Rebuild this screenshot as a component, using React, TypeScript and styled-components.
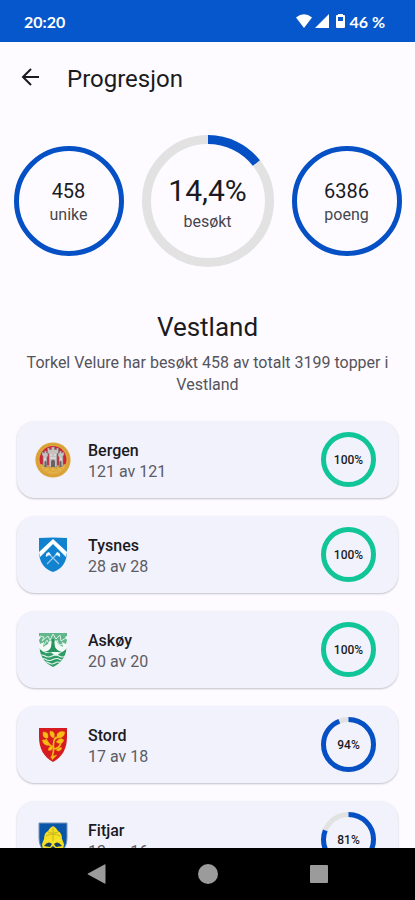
import React from "react";
import styled, { createGlobalStyle } from "styled-components";

const GlobalStyle = createGlobalStyle`
  *, *::before, *::after { box-sizing: border-box; }
  body { margin: 0; background: #fdfbff; }
  button { font: inherit; color: inherit; border: 0; padding: 0; background: none; cursor: pointer; }
`;

const blue = "#0450c4";
const green = "#10c598";

const Screen = styled.div`
  display: flex;
  flex-direction: column;
  height: 100vh;
  overflow: hidden;
  background: #fdfbff;
  color: #1b1b1f;
  font-family: Roboto, "Liberation Sans", sans-serif;
`;

const StatusBar = styled.div`
  display: flex;
  flex: none;
  align-items: center;
  justify-content: space-between;
  height: 42px;
  padding: 0 30px 0 24px;
  background: #0557cb;
  color: #fff;
  font-family: Lato, "Open Sans", sans-serif;
  font-size: 16px;
  font-weight: 700;
`;

const StatusIcons = styled.div`
  display: flex;
  align-items: center;
  gap: 3px;
`;

const AppBar = styled.header`
  display: flex;
  flex: none;
  align-items: center;
  gap: 24px;
  height: 72px;
  padding: 0 19px;
`;

const BackButton = styled.button`
  display: grid;
  width: 24px;
  height: 24px;
`;

const PageTitle = styled.h1`
  margin: 0;
  padding-top: 2px;
  font-size: 24px;
  line-height: 32px;
  font-weight: 400;
`;

const Content = styled.main`
  flex: 1;
  min-height: 0;
  overflow: hidden;
  padding: 21px 0 0;
`;

const Stats = styled.section`
  display: flex;
  align-items: center;
  justify-content: center;
  gap: 18px;
`;

const RingBox = styled.div<{ $size: number }>`
  display: grid;
  flex: none;
  place-items: center;
  width: ${(p) => p.$size}px;
  height: ${(p) => p.$size}px;

  & > * { grid-area: 1 / 1; }
`;

const RingText = styled.div`
  display: flex;
  flex-direction: column;
  align-items: center;
  padding-top: 4px;
`;

const StatValue = styled.strong<{ $large?: boolean }>`
  font-size: ${(p) => (p.$large ? 30 : 20)}px;
  line-height: ${(p) => (p.$large ? 38 : 24)}px;
  font-weight: 400;
`;

const StatLabel = styled.span`
  font-size: 16px;
  line-height: 24px;
  color: #46464d;
`;

const Percent = styled.span`
  padding-top: 1px;
  font-size: 12px;
  font-weight: 500;
`;

const Intro = styled.section`
  padding: 42px 24px 0;
  text-align: center;
`;

const RegionName = styled.h2`
  margin: 0;
  font-size: 26px;
  line-height: 36px;
  font-weight: 400;
`;

const Summary = styled.p`
  margin: 7px 0 0;
  font-size: 16px;
  line-height: 22px;
  color: #54545c;
`;

const List = styled.ul`
  display: flex;
  flex-direction: column;
  gap: 18px;
  margin: 0;
  padding: 25px 17px 18px;
  list-style: none;
`;

const Card = styled.li`
  display: flex;
  align-items: center;
  height: 77px;
  padding: 0 22px 0 18px;
  border-radius: 18px;
  background: #f1f2fc;
  box-shadow: 0 1px 2px rgba(40, 40, 60, 0.28);
`;

const Names = styled.div`
  display: flex;
  flex: 1;
  flex-direction: column;
  padding: 2px 0 0 17px;
`;

const Municipality = styled.h3`
  margin: 0;
  font-size: 16px;
  line-height: 21px;
  font-weight: 500;
`;

const Count = styled.span`
  font-size: 16px;
  line-height: 21px;
  color: #5c5c64;
`;

const NavBar = styled.nav`
  display: flex;
  flex: none;
  align-items: center;
  justify-content: center;
  gap: 87px;
  height: 52px;
  background: #000;
`;

const NavButton = styled.button`
  display: grid;
  width: 24px;
  height: 24px;
  place-items: center;
`;

function Ring({ size, stroke, value, color, children }: {
  size: number; stroke: number; value: number; color: string; children: React.ReactNode;
}) {
  const r = (size - stroke) / 2;
  const c = size / 2;
  return (
    <RingBox $size={size}>
      <svg width={size} height={size} viewBox={`0 0 ${size} ${size}`} aria-hidden="true">
        {value < 100 && <circle cx={c} cy={c} r={r} fill="none" stroke="#e2e2e3" strokeWidth={stroke} />}
        <circle
          cx={c} cy={c} r={r} fill="none" stroke={color} strokeWidth={stroke}
          pathLength={100}
          strokeDasharray={value < 100 ? `${value} ${100 - value}` : undefined}
          transform={`rotate(-90 ${c} ${c})`}
        />
      </svg>
      {children}
    </RingBox>
  );
}

const Bergen = () => (
  <svg width="36" height="36" viewBox="0 0 36 36" aria-hidden="true">
    <circle cx="18" cy="18" r="17.6" fill="#dda63a" />
    <circle cx="18" cy="18" r="15.8" fill="none" stroke="#cf9638" strokeWidth="1" strokeDasharray="1.5 1.5" />
    <circle cx="18" cy="17.5" r="13.4" fill="#cf2238" />
    <path d="M5 22q13 3 26 0a13.5 13.5 0 0 1-26 0z" fill="#e5b448" />
    <g fill="#c4c1bf" stroke="#857579" strokeWidth=".6">
      <path d="M8 24V14l-1-1v-3h1.500v1h1V9h2v2h1.500v3l-1 1v10zM24 25V15l-1-1v-3h1.500V9h2v2h1v-1H29v3l-1 1v10z" />
      <path d="M14 25V12l-1.500-1.500V6h2v1.500h2V5h3v2.500h2V6h2v4.500L22 12v13z" />
    </g>
    <path d="M16 25v-6q2-3 4 0v6zM9.500 25v-5q1-2 2 0v5zM24.500 25v-5q1-2 2 0v5z" fill="#6a6266" />
    <path d="M15 13h2m2 0h2M15 16h6M9 17h2m14 0h2" stroke="#eceae7" />
    <path d="M9 27l3-2 3 2 3-2 3 2 3-2 3 2M12 30l3-2 3 2 3-2 3 2" fill="none" stroke="#d09b3a" strokeWidth=".8" />
  </svg>
);

const Tysnes = () => (
  <svg width="36" height="36" viewBox="0 0 36 36" aria-hidden="true">
    <path d="M4 1q14-1 28 0v13c0 11-5 18-14 21C9 32 4 25 4 14z" fill="#1182cf" />
    <path d="M18 2 32 15l-1 5L18 7 5 20l-1-5z" fill="#fff" />
    <path d="m12 27 11-11M24 27 13 16" stroke="#9fccec" strokeWidth="1.200" />
    <path d="M11 20q-1-4 3-5l2 3q-3 0-5 2zm14 0q1-4-3-5l-2 3q3 0 5 2z" fill="#e7f4fc" />
  </svg>
);

const Askoy = () => (
  <svg width="36" height="36" viewBox="0 0 36 36" aria-hidden="true">
    <clipPath id="askoy-shield"><path d="M4 1h28v10c0 12-5 20-14 24C9 31 4 23 4 11z" /></clipPath>
    <g clipPath="url(#askoy-shield)">
      <path fill="#f4faf7" d="M0 0h36v36H0z" />
      <path d="M4 1h28v3l-2 1 2 3-1 4-4-2 1 5-5-3-2-4-3 3-3-3-2 4-5 3 1-5-4 2-1-4 2-3-2-1z" fill="#62b68c" />
      <path d="M5 4l4 1-2 4 6-5 2 4 3-6 3 5 4-4 1 6 5-3M9 13l3-5 2 4m8-4 2 5 4-1" fill="none" stroke="#d8eee2" strokeWidth="1" />
      <path d="M17 7h2l1 8q2 4 7 5H9q6-1 7-5zM4 16q4 5 9 5l-7 2zM32 16q-4 5-9 5l7 2z" fill="#25945f" />
      <path d="M4 20q4 3 8 1t6 1 6 0 8-1v15H4z" fill="#309d68" />
      <path d="M3 24q4-2 7 0t7 0 7 0 8 0M4 27.500q4-2 7 0t7 0 7 0 7 0M8 31q3-2 6 0t6 0 6 0" fill="none" stroke="#e8f6ef" strokeWidth="1.100" />
    </g>
  </svg>
);

const Stord = () => (
  <svg width="36" height="36" viewBox="0 0 36 36" aria-hidden="true">
    <path d="M4 1h28v9c0 12-5 20-14 25C9 30 4 22 4 10z" fill="#d71920" />
    <path d="M16 31c6-8-1-14 5-21M18 20q-5-2-7-8m7 10q6 0 8-6M20 12l6-5" fill="none" stroke="#f2b514" strokeWidth="1.700" />
    <g fill="#f7bd16" stroke="#e4930e" strokeWidth=".4">
      <path d="M8 5q6-1 5 6-6 1-5-6zM15 4q6 0 4 7-5-1-4-7zM22 7q3-4 8-2-1 7-8 6zM7 13q6-1 8 5-6 2-8-5zM21 15q4-6 8-2-2 6-8 2zM13 23q1-5 5-3-1 5-5 3zM21 23q4-4 6-2-2 5-6 2zM17 29l5-1-5 5z" />
    </g>
  </svg>
);

const Fitjar = () => (
  <svg width="36" height="36" viewBox="0 0 36 36" aria-hidden="true">
    <path d="M4 1h28v15c0 10-6 16-14 19C10 32 4 26 4 16z" fill="#0956a9" stroke="#7896bd" strokeWidth="1" />
    <path d="M9 17q0-6 4-8 1-3 5-5 4 2 5 5 4 2 4 8l2 5-1 7-5-2-5 5-5-5-5 2-1-7z" fill="#f4df22" />
    <path d="M18 6v13M11 14q7-4 14 0M13 10q5 3 10 0" fill="none" stroke="#c9b525" strokeWidth="1" />
    <path d="M9 24q4-6 8-2l-2 3zM27 24q-4-6-8-2l2 3zM12 29l6-5 6 5-6 3z" fill="#173c65" />
    <path d="M10 19q5-3 8 2 3-5 8-2" fill="none" stroke="#f8e941" />
  </svg>
);

const rows = [
  { name: "Bergen", count: "121 av 121", percent: 100, Crest: Bergen },
  { name: "Tysnes", count: "28 av 28", percent: 100, Crest: Tysnes },
  { name: "Askøy", count: "20 av 20", percent: 100, Crest: Askoy },
  { name: "Stord", count: "17 av 18", percent: 94, Crest: Stord },
  { name: "Fitjar", count: "13 av 16", percent: 81, Crest: Fitjar },
];

export default function App() {
  return (
    <Screen>
      <GlobalStyle />
      <StatusBar>
        <span>20:20</span>
        <StatusIcons>
          <svg width="16" height="14" viewBox="0 0 16 14" fill="#fff" aria-hidden="true">
            <path d="M0 3.500Q8-3 16 3.500L8 14z" />
          </svg>
          <svg width="14" height="14" viewBox="0 0 14 14" fill="#fff" aria-hidden="true">
            <path d="M14 0v14H0z" />
          </svg>
          <svg width="14" height="16" viewBox="0 0 14 16" aria-hidden="true">
            <path d="M6 1h5v1h1q1 0 1 1v11q0 1-1 1H5q-1 0-1-1V3q0-1 1-1h1z" fill="#fff" />
            <path d="M6 4h5v4H6z" fill="#0557cb" />
          </svg>
          <span>46 %</span>
        </StatusIcons>
      </StatusBar>
      <AppBar>
        <BackButton aria-label="Tilbake">
          <svg width="24" height="24" viewBox="0 0 24 24" fill="none" stroke="currentColor" strokeWidth="2" aria-hidden="true">
            <path d="M20 11H4M12 3l-8 8 8 8" />
          </svg>
        </BackButton>
        <PageTitle>Progresjon</PageTitle>
      </AppBar>
      <Content>
        <Stats>
          <Ring size={110} stroke={5} value={100} color={blue}>
            <RingText><StatValue>458</StatValue><StatLabel>unike</StatLabel></RingText>
          </Ring>
          <Ring size={132} stroke={9} value={14.4} color={blue}>
            <RingText><StatValue $large>14,4%</StatValue><StatLabel>besøkt</StatLabel></RingText>
          </Ring>
          <Ring size={110} stroke={5} value={100} color={blue}>
            <RingText><StatValue>6386</StatValue><StatLabel>poeng</StatLabel></RingText>
          </Ring>
        </Stats>
        <Intro>
          <RegionName>Vestland</RegionName>
          <Summary>Torkel Velure har besøkt 458 av totalt 3199 topper i Vestland</Summary>
        </Intro>
        <List>
          {rows.map(({ name, count, percent, Crest }) => (
            <Card key={name}>
              <Crest />
              <Names>
                <Municipality>{name}</Municipality>
                <Count>{count}</Count>
              </Names>
              <Ring size={55} stroke={5} value={percent} color={percent === 100 ? green : blue}>
                <Percent>{percent}%</Percent>
              </Ring>
            </Card>
          ))}
        </List>
      </Content>
      <NavBar aria-label="System">
        <NavButton aria-label="Tilbake">
          <svg width="20" height="20" viewBox="0 0 20 20" fill="#9b9b9b" aria-hidden="true">
            <path d="M17.500.5q1-.5 1 .5v18q0 1-1 .5L1 10.500q-1-.5 0-1z" />
          </svg>
        </NavButton>
        <NavButton aria-label="Hjem">
          <svg width="20" height="20" viewBox="0 0 20 20" fill="#9b9b9b" aria-hidden="true"><circle cx="10" cy="10" r="10" /></svg>
        </NavButton>
        <NavButton aria-label="Oversikt">
          <svg width="18" height="18" viewBox="0 0 18 18" fill="#9b9b9b" aria-hidden="true"><rect width="18" height="18" rx="1" /></svg>
        </NavButton>
      </NavBar>
    </Screen>
  );
}
